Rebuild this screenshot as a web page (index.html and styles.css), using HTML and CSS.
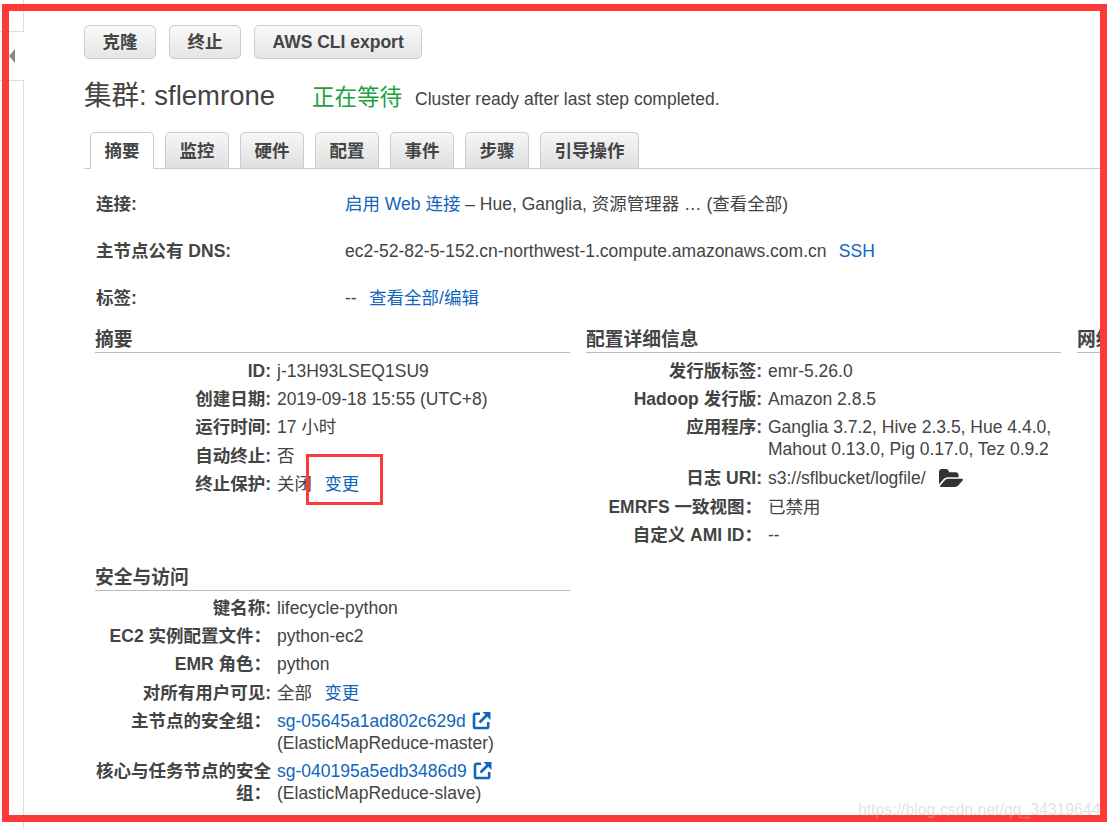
FILE: index.html
```html
<!DOCTYPE html>
<html lang="zh">
<head>
<meta charset="utf-8">
<title>集群: sflemrone</title>
<link rel="stylesheet" href="styles.css">
</head>
<body>
<div class="page">
  <aside class="rail">
    <div class="rail-top"></div>
    <div class="rail-handle"><span class="rail-arrow"></span></div>
    <div class="rail-bottom"></div>
  </aside>
  <main class="main">
    <div class="actions">
      <button class="btn">克隆</button>
      <button class="btn">终止</button>
      <button class="btn">AWS CLI export</button>
    </div>
    <header class="title-row">
      <h1 class="title">集群: sflemrone</h1>
      <span class="state">正在等待</span>
      <span class="state-note">Cluster ready after last step completed.</span>
    </header>
    <nav class="tabs">
      <a class="tab tab-active">摘要</a>
      <a class="tab">监控</a>
      <a class="tab">硬件</a>
      <a class="tab">配置</a>
      <a class="tab">事件</a>
      <a class="tab">步骤</a>
      <a class="tab">引导操作</a>
    </nav>
    <section class="overview">
      <div class="ov-row"><b class="ov-label">连接:</b><span><a class="link">启用 Web 连接</a> – Hue, Ganglia, 资源管理器 … (查看全部)</span></div>
      <div class="ov-row"><b class="ov-label">主节点公有 DNS:</b><span>ec2-52-82-5-152.cn-northwest-1.compute.amazonaws.com.cn <a class="link link-gap">SSH</a></span></div>
      <div class="ov-row"><b class="ov-label">标签:</b><span>-- <a class="link link-gap">查看全部/编辑</a></span></div>
    </section>
    <div class="columns">
      <div class="col">
        <section class="block block-summary">
          <h2 class="block-head">摘要</h2>
          <dl class="facts">
            <dt>ID:</dt><dd>j-13H93LSEQ1SU9</dd>
            <dt>创建日期:</dt><dd>2019-09-18 15:55 (UTC+8)</dd>
            <dt>运行时间:</dt><dd>17 小时</dd>
            <dt>自动终止:</dt><dd>否</dd>
            <dt>终止保护:</dt><dd>关闭 <a class="link link-gap">变更</a></dd>
          </dl>
        </section>
        <section class="block">
          <h2 class="block-head">安全与访问</h2>
          <dl class="facts facts-tight">
            <dt>键名称:</dt><dd>lifecycle-python</dd>
            <dt>EC2 实例配置文件：</dt><dd>python-ec2</dd>
            <dt>EMR 角色：</dt><dd>python</dd>
            <dt>对所有用户可见:</dt><dd>全部 <a class="link link-gap">变更</a></dd>
            <dt>主节点的安全组：</dt><dd><a class="link">sg-05645a1ad802c629d</a> <svg class="ext" viewBox="0 0 19 19"><path d="M8 2.8H3.6A1.6 1.6 0 0 0 2 4.4v11A1.6 1.6 0 0 0 3.6 17h11a1.6 1.6 0 0 0 1.6-1.6V11" fill="none" stroke="#1166bb" stroke-width="2.6"/><path d="M7.5 11.5 15 4" fill="none" stroke="#1166bb" stroke-width="2.6"/><path d="M10.5 1H18.5V9Z" fill="#1166bb"/></svg><br>(ElasticMapReduce-master)</dd>
            <dt>核心与任务节点的安全组：</dt><dd><a class="link">sg-040195a5edb3486d9</a> <svg class="ext" viewBox="0 0 19 19"><path d="M8 2.8H3.6A1.6 1.6 0 0 0 2 4.4v11A1.6 1.6 0 0 0 3.6 17h11a1.6 1.6 0 0 0 1.6-1.6V11" fill="none" stroke="#1166bb" stroke-width="2.6"/><path d="M7.5 11.5 15 4" fill="none" stroke="#1166bb" stroke-width="2.6"/><path d="M10.5 1H18.5V9Z" fill="#1166bb"/></svg><br>(ElasticMapReduce-slave)</dd>
          </dl>
        </section>
      </div>
      <div class="col">
        <section class="block">
          <h2 class="block-head">配置详细信息</h2>
          <dl class="facts">
            <dt>发行版标签:</dt><dd>emr-5.26.0</dd>
            <dt>Hadoop 发行版:</dt><dd>Amazon 2.8.5</dd>
            <dt>应用程序:</dt><dd>Ganglia 3.7.2, Hive 2.3.5, Hue 4.4.0, Mahout 0.13.0, Pig 0.17.0, Tez 0.9.2</dd>
            <dt>日志 URI:</dt><dd class="log-row">s3://sflbucket/logfile/ <svg class="folder" viewBox="0 128 1879 1408"><path fill="#333" d="M1879 952q0 31-31 66l-336 396q-43 51-120.5 86.5t-143.5 35.5h-1088q-34 0-60.5-13t-26.5-43q0-31 31-66l336-396q43-51 120.5-86.5t143.5-35.5h1088q34 0 60.5 13t26.5 43zm-343-344v160h-832q-94 0-197 47.5t-164 119.5l-337 396-5 6q0-4-.5-12.5t-.5-12.5v-960q0-92 66-158t158-66h320q92 0 158 66t66 158v32h544q92 0 158 66t66 158z"/></svg></dd>
            <dt>EMRFS 一致视图：</dt><dd>已禁用</dd>
            <dt>自定义 AMI ID：</dt><dd>--</dd>
          </dl>
        </section>
      </div>
      <div class="col">
        <section class="block">
          <h2 class="block-head">网络和硬件</h2>
        </section>
      </div>
    </div>
  </main>
  <div class="frame"></div>
  <div class="callout"></div>
  <div class="watermark">https://blog.csdn.net/qq_34319644</div>
</div>
</body>
</html>
```
FILE: styles.css
```css
* { box-sizing: border-box; }
html, body { margin: 0; background: #fff; }
body {
  font-family: "Liberation Sans", "Noto Sans CJK SC", sans-serif;
  font-size: 17.5px;
  line-height: 22px;
  color: #444;
}
.page {
  position: relative;
  display: flex;
  width: 1111px;
  height: 828px;
  overflow: hidden;
}
.rail {
  flex: none;
  width: 24px;
  display: flex;
  flex-direction: column;
}
.rail-top {
  height: 32px;
  border-right: 1px solid #ddd;
  border-bottom: 1px solid #ddd;
}
.rail-handle {
  height: 48px;
  display: flex;
  align-items: center;
  padding-left: 9px;
}
.rail-arrow {
  width: 0;
  height: 0;
  border-style: solid;
  border-width: 7px 6px 7px 0;
  border-color: transparent #8a8a8a transparent transparent;
}
.rail-bottom {
  flex: 1;
  border-right: 1px solid #ddd;
  border-top: 1px solid #ddd;
}
.main {
  flex: none;
  width: 1080px;
  padding: 25px 0 0 60px;
  overflow: hidden;
}
.actions { display: flex; gap: 13px; }
.btn {
  height: 34px;
  padding: 0 17.5px;
  border: 1px solid #ccc;
  border-radius: 5px;
  background: linear-gradient(#fafafa, #e4e4e4);
  font: bold 17.5px/22px "Liberation Sans", "Noto Sans CJK SC", sans-serif;
  color: #444;
}
.title-row {
  display: flex;
  align-items: baseline;
  margin-top: 19px;
  height: 36px;
}
.title {
  margin: 0;
  font-size: 27.5px;
  line-height: 36px;
  font-weight: normal;
}
.state {
  margin-left: 37px;
  font-size: 22.5px;
  color: #1d9f3b;
}
.state-note { margin-left: 13px; }
.tabs {
  display: flex;
  gap: 11px;
  margin-top: 18px;
  padding-left: 6px;
  height: 37px;
  border-bottom: 1px solid #ccc;
}
.tab {
  height: 36px;
  padding: 7px 13.5px 0;
  border: 1px solid #ccc;
  border-bottom: 0;
  border-radius: 5px 5px 0 0;
  background: linear-gradient(#f6f6f6, #e0e0e0);
  font-weight: bold;
}
.tab-active { height: 37px; background: #fff; }
.overview { padding: 24px 0 0 12px; }
.ov-row { display: flex; height: 47px; }
.ov-label { flex: none; width: 249px; }
.link { color: #1166bb; }
.link-gap { margin-left: 7.5px; }
.columns {
  display: flex;
  gap: 16px;
  margin-top: -6px;
  padding-left: 11px;
}
.col { flex: none; width: 475px; }
.block-summary { height: 238px; }
.block-head {
  margin: 0;
  height: 25px;
  font-size: 18.75px;
  line-height: 24px;
  border-bottom: 1px solid #bbb;
}
.facts {
  display: grid;
  grid-template-columns: 176px 1fr;
  column-gap: 6px;
  row-gap: 6.4px;
  margin: 6.5px 0 0;
}
.facts-tight { margin-top: 5.5px; }
.facts dt { font-weight: bold; text-align: right; }
.facts dd { margin: 0; }
.log-row { min-height: 23px; }
.ext { width: 19px; height: 19px; vertical-align: -3px; margin-left: 1px; }
.folder { width: 24px; height: 18px; vertical-align: -3px; margin-left: 9px; }
.frame {
  position: absolute;
  left: 2px;
  top: 4px;
  width: 1105px;
  height: 818px;
  border: 7px solid #ff3838;
}
.callout {
  position: absolute;
  left: 306px;
  top: 454px;
  width: 77px;
  height: 51px;
  border: 3px solid #ff3838;
}
.watermark {
  position: absolute;
  left: 858px;
  top: 799px;
  font-size: 15.8px;
  color: rgba(190, 190, 190, 0.45);
  white-space: nowrap;
}
```
